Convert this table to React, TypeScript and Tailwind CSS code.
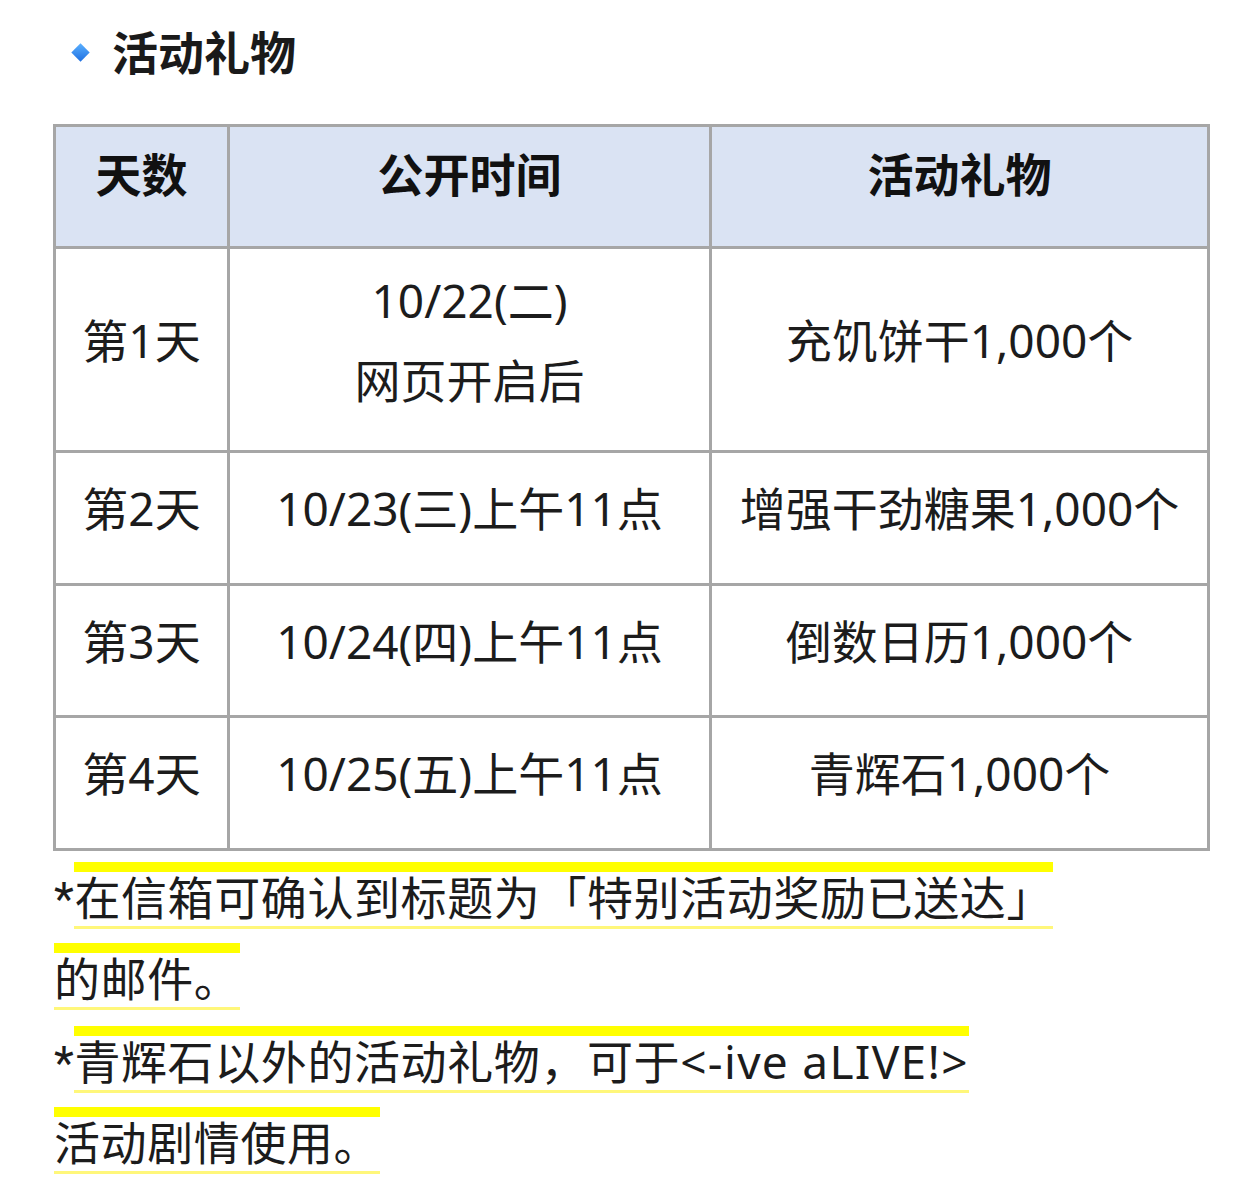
const rows = [
  { day: "第1天", time: ["10/22(二)", "网页开启后"], gift: "充饥饼干1,000个", h: "h-[204px]" },
  { day: "第2天", time: ["10/23(三)上午11点"], gift: "增强干劲糖果1,000个", h: "h-[133px]" },
  { day: "第3天", time: ["10/24(四)上午11点"], gift: "倒数日历1,000个", h: "h-[132px]" },
  { day: "第4天", time: ["10/25(五)上午11点"], gift: "青辉石1,000个", h: "h-[133px]" },
];

const mark = "border-t-[10px] border-b-[3px] border-t-[#ffff00] border-b-[#fff77a]";

export default function App() {
  return (
    <div className="min-h-[1204px] w-[1240px] bg-white text-[46px] text-[#1c1c1c] [font-family:'Noto_Sans','Noto_Sans_CJK_SC',sans-serif]">
      <div className="flex items-center pl-[74px] pt-[28px]">
        <span className="mr-[25px] block h-[13px] w-[13px] rotate-45 bg-gradient-to-br from-[#5ab0ff] to-[#1f6fe0]" />
        <h2 className="text-[46px] font-bold leading-[48px] text-[#1a1a1a]">活动礼物</h2>
      </div>

      <table className="ml-[53px] mt-[48px] w-[1154px] table-fixed border-collapse border-[3px] border-[#a6a6a6] text-center">
        <colgroup>
          <col className="w-[174px]" />
          <col className="w-[482px]" />
          <col className="w-[498px]" />
        </colgroup>
        <thead>
          <tr className="h-[122px] bg-[#dae3f3]">
            <th className="border-[3px] border-[#a6a6a6] pb-6 font-bold text-[#111]">天数</th>
            <th className="border-[3px] border-[#a6a6a6] pb-6 font-bold text-[#111]">公开时间</th>
            <th className="border-[3px] border-[#a6a6a6] pb-6 font-bold text-[#111]">活动礼物</th>
          </tr>
        </thead>
        <tbody>
          {rows.map((r) => (
            <tr key={r.day} className={r.h}>
              <td className="border-[3px] border-[#a6a6a6] pb-5 leading-[80px]">{r.day}</td>
              <td className="border-[3px] border-[#a6a6a6] pb-5 leading-[80px] whitespace-nowrap">
                {r.time.map((t) => (
                  <div key={t}>{t}</div>
                ))}
              </td>
              <td className="border-[3px] border-[#a6a6a6] pb-5 leading-[80px] whitespace-nowrap">{r.gift}</td>
            </tr>
          ))}
        </tbody>
      </table>

      <div className="ml-[54px] mt-[8px] leading-[81px] tracking-[0.6px] [font-family:Roboto,'Noto_Sans_CJK_SC',sans-serif]">
        <p>
          *<span className={mark}>在信箱可确认到标题为「特别活动奖励已送达」</span>
          <br />
          <span className={mark}>的邮件。</span>
        </p>
        <p>
          *
          <span className={mark}>
            青辉石以外的活动礼物，可于
            <span className="tracking-[1.3px] [font-family:'Noto_Sans',sans-serif]">&lt;-ive aLIVE!&gt;</span>
          </span>
          <br />
          <span className={mark}>活动剧情使用。</span>
        </p>
      </div>
    </div>
  );
}
